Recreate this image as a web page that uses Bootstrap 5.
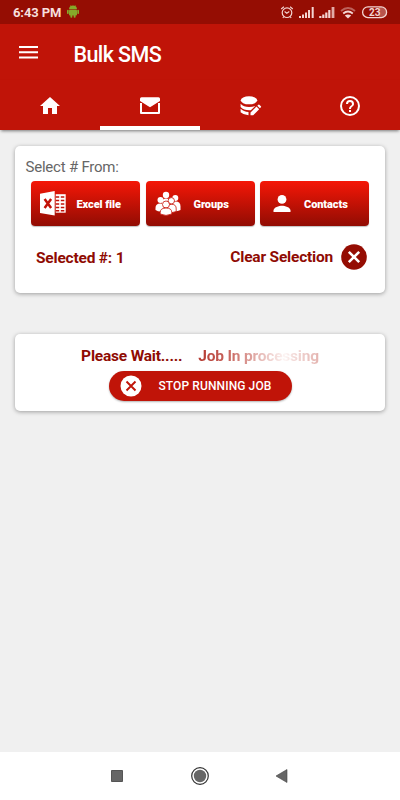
<!DOCTYPE html>
<html lang="en">
<head>
<meta charset="utf-8">
<meta name="viewport" content="width=device-width, initial-scale=1">
<title>Bulk SMS</title>
<link href="https://cdn.jsdelivr.net/npm/bootstrap@5.3.0/dist/css/bootstrap.min.css" rel="stylesheet">
<style>
body{font-family:Roboto,sans-serif;background:#f0f0f0;height:800px;overflow:hidden;line-height:1}
svg{display:block;flex:none}
.status{height:24px;background:#950d03;color:#f6dedc;font-size:13px;font-weight:700;letter-spacing:-.1px;padding:0 12px 0 13px}
.appbar{height:56px;background:#c01408;padding-left:19px}
.title{font-size:21.5px;font-weight:500;letter-spacing:-.6px;margin:5px 0 0 34.500px}
.tabs{height:50px;background:#c01408;box-shadow:0 2px 3px -1px rgba(0,0,0,.5)}
.tabs a{color:#fff;border-bottom:4px solid transparent;padding-top:6px}
.tabs a.on{border-color:#fff}
.panel{margin:0 15px;background:#fff;border-radius:5px;box-shadow:0 1px 4px rgba(0,0,0,.35)}
.pick{height:147px;margin-top:16px}
.job{height:77px;margin-top:41px}
.from{font-size:15px;letter-spacing:-.22px;color:#666;padding:14px 0 0 10.500px;height:35px}
.src{height:45px;width:109px;border:0;border-radius:4px;background:linear-gradient(#f51707,#910c03);color:#fff;font-size:11px;font-weight:900;letter-spacing:-.08px;padding:2px 0 0;box-shadow:0 1px 1px rgba(0,0,0,.25)}
.src svg{margin-top:-2px}
.dark-red{color:#8f0b03;font-weight:700;font-size:15.500px;letter-spacing:-.2px}
.summary{padding:0 18px 0 21px;margin-top:18px}
.clear-label{padding-top:2px}
.fade-text{background:linear-gradient(90deg,#b4382f 0,#c8655e 25%,#e4b4b0 50%,#f6e2e0 66%,#fdf6f5 72%,#f4dddb 78%,#e4b4b0 100%);background-clip:text;-webkit-background-clip:text;color:transparent}
.wait{padding-top:15px}
.stop{width:183px;height:30px;background:#c01408;color:#fff;font-size:12px;font-weight:500;letter-spacing:.1px;margin-top:6px;padding:0 0 0 11px;gap:17px;box-shadow:0 1px 2px rgba(0,0,0,.3)}
.navkeys{height:48px;background:#fff}
</style>
</head>
<body class="d-flex flex-column">
<div class="status d-flex align-items-center">
  <span>6:43 PM</span>
  <svg class="ms-1 me-auto" width="14" height="14" viewBox="-1 .2 14 14"><g fill="#86a92a"><path d="M3 4.500a4 3.800 0 0 1 8 0z"/><rect x="3" y="5" width="8" height="5.800" rx="1"/><rect x="1" y="5" width="1.700" height="4.300" rx=".8"/><rect x="11.300" y="5" width="1.700" height="4.300" rx=".8"/><rect x="4.400" y="10" width="1.900" height="3" rx=".8"/><rect x="7.700" y="10" width="1.900" height="3" rx=".8"/><path d="M4.400.5l1.200 1.800M9.600.5L8.400 2.300" stroke="#86a92a" stroke-width=".6"/></g></svg>
  <svg width="108" height="16" viewBox="280 4 108 16" fill="none" stroke="#f3d5d2">
    <circle cx="287" cy="12.700" r="4.800" stroke-width="1.200"/><path d="M284.600 11.500l2.200 1.800 2.500-1.800M281.200 9l2.700-2.200M292.800 9l-2.700-2.200M284 16.500l-1.200 1.500M290 16.500l1.200 1.500" stroke-width="1.100"/>
    <path d="M300 18v-2M303 18v-3.500M306 18v-5.500M309 18v-8M312.700 18V7" stroke-width="2"/>
    <path d="M320.300 18v-2M323.300 18v-3.500M326.300 18v-5.500M329.300 18v-8" stroke-width="2.200"/><path d="M333 18V7" stroke-width="2.800" stroke="#e2aaa6"/>
    <path d="M341 11q7-6 14 0" stroke="#bd625b" stroke-width="1.800"/><path d="M343.200 13.500q4.800-4 9.600 0" stroke-width="1.800"/><path d="M344.800 15.600q3.200-2.400 6.400 0l-3.200 2.900z" fill="#f3d5d2" stroke="none"/>
    <path d="M379 7h2.500a5 5 0 0 1 0 10.500H379z" fill="#b8544c" stroke="none"/><rect x="362.600" y="6.800" width="24" height="10.800" rx="5.400" stroke-width="1.300"/>
    <text x="369" y="16" font-size="10" font-weight="700" fill="#f3d5d2" stroke="none">23</text>
  </svg>
</div>
<header class="appbar d-flex align-items-center text-white">
  <svg width="20" height="16" viewBox="0 0 20 16" fill="#fff"><path d="M0 2h19v2H0zM0 7.200h19v2H0zM0 12.500h19v2H0z"/></svg>
  <span class="title">Bulk SMS</span>
</header>
<nav class="tabs nav nav-fill flex-nowrap">
  <a class="col-3 d-flex justify-content-center align-items-center" href="#" aria-label="Home"><svg width="24" height="24" viewBox="0 0 24 24" fill="#fff"><path d="M10 20v-6h4v6h5v-8h3L12 3 2 12h3v8z"/></svg></a>
  <a class="on col-3 d-flex justify-content-center align-items-center" href="#" aria-label="Message"><svg width="24" height="24" viewBox="0 0 24 24" fill="#fff"><path d="M3.500 3.300h17q1.500 0 1.500 1.500v2.300L12 13.300 2 7.100V4.800q0-1.500 1.500-1.500z"/><path d="M3 9v10h18V9" fill="none" stroke="#fff" stroke-width="2" stroke-linejoin="round"/></svg></a>
  <a class="col-3 d-flex justify-content-center align-items-center" href="#" aria-label="Data"><svg width="24" height="24" viewBox="0 0 24 24" fill="#fff"><ellipse cx="11" cy="6.300" rx="8.200" ry="4"/><path d="M2.600 9.700q3 3.300 8.400 3.300 3.600 0 6.300-1.100l-4.500 4.300q-6.700.5-10.200-3.200z"/><path d="M2.600 14.800q3 3 7.900 3.200v3.300q-4.800-.2-7.900-3.100z"/><path d="M12.500 18.600l6-6 2.700 2.700-6 6h-2.700zM19.300 11.800l1.100-1.100q.5-.4 1 0l1.500 1.500q.5.500 0 1L21.900 14.300z"/></svg></a>
  <a class="col-3 d-flex justify-content-center align-items-center" href="#" aria-label="Help"><svg width="24" height="24" viewBox="0 0 24 24" fill="#fff"><path d="M11 18h2v-2h-2zm1-16a10 10 0 1 0 0 20 10 10 0 0 0 0-20zm0 18a8 8 0 1 1 0-16 8 8 0 0 1 0 16zm0-14a4 4 0 0 0-4 4h2a2 2 0 1 1 4 0c0 2-3 1.750-3 5h2c0-2.250 3-2.500 3-5a4 4 0 0 0-4-4z"/></svg></a>
</nav>
<section class="panel pick">
  <div class="from">Select # From:</div>
  <div class="d-flex justify-content-between px-3">
    <button class="src d-flex align-items-center"><svg width="45.500" height="45" viewBox="0 0 45.500 45"><path d="M9 12.800L23.700 10v24.500L9 32z" fill="#fff"/><path d="M24.700 13.200h10v18.500h-10z" fill="#fff"/><path d="M24.700 16h3.500M24.700 19.500h3.500M24.700 23h3.500M24.700 26.500h3.500M24.700 29.800h3.500M29.800 16h3.500M29.800 19.500h3.500M29.800 23h3.500M29.800 26.500h3.500M29.800 29.800h3.500" stroke="#c21107" stroke-width="1.600"/><path d="M13.600 18l6.500 9M20.100 18l-6.500 9" stroke="#c21107" stroke-width="2.500"/></svg><span>Excel file</span></button>
    <button class="src d-flex align-items-center"><svg width="48" height="45" viewBox="0 0 48 45" fill="#fff"><circle cx="20" cy="14" r="3.200"/><path d="M16 22q0-4.500 4-4.500t4 4.500v3h-8z"/><circle cx="29.300" cy="17" r="3"/><path d="M26 30v-5q0-4.500 3.700-4.500 4.800 0 4.800 5v3.500q-4 2-8.500 1z"/><circle cx="14.500" cy="19" r="3"/><path d="M9.500 29v-2q0-4.500 4.700-4.500T18 26l-2 4.500q-3.500.5-6.500-1.500z"/><g stroke="#c81107" stroke-width=".8"><circle cx="25.300" cy="19.800" r="3.200"/><path d="M21 31v-3q0-4.700 4.700-4.700t4.500 4.700v2.500q-4 2-9.200.500z"/><circle cx="20" cy="23.500" r="3.500"/><path d="M14.200 33v-1.500q0-4.500 5.800-4.500t5.800 4.500V33q-5.800 2.800-11.600 0z"/></g></svg><span>Groups</span></button>
    <button class="src d-flex align-items-center"><svg width="44" height="45" viewBox="0 0 44 45" fill="#fff"><circle cx="22" cy="18.400" r="4.400"/><path d="M13.500 31v-1.500c0-3.200 5.700-4.800 8.500-4.800s8.500 1.600 8.500 4.800V31z"/></svg><span>Contacts</span></button>
  </div>
  <div class="summary d-flex align-items-center justify-content-between dark-red">
    <span class="pt-1">Selected #: 1</span>
    <span class="d-flex align-items-center"><span class="clear-label me-2">Clear Selection</span><svg width="26" height="26" viewBox="0 0 26 26"><circle cx="13" cy="13" r="12.800" fill="#950d03"/><path d="M7.800 7.800l10.400 10.400M18.200 7.800L7.800 18.200" stroke="#fff" stroke-width="2.600"/></svg></span>
  </div>
</section>
<section class="panel job d-flex flex-column align-items-center">
  <div class="wait dark-red d-flex"><span class="me-3">Please Wait.....</span><span class="fade-text">Job In processing</span></div>
  <button class="stop btn rounded-pill border-0 d-flex align-items-center"><svg width="22" height="22" viewBox="0 0 22 22"><circle cx="11" cy="11" r="10.500" fill="#fff"/><path d="M6.500 6.500l9 9M15.500 6.500l-9 9" stroke="#c01408" stroke-width="1.900"/></svg><span>STOP RUNNING JOB</span></button>
</section>
<footer class="navkeys mt-auto d-flex justify-content-center">
  <svg width="200" height="48" viewBox="100 0 200 48" fill="#666"><path d="M111.500 18.500h11v11h-11z" stroke="#555"/><circle cx="200" cy="24" r="8.300" fill="none" stroke="#333" stroke-width="1.200"/><circle cx="200" cy="24" r="6.200"/><path d="M276 24l11-6.500v13z" stroke="#444" stroke-width=".6"/></svg>
</footer>
<script src="https://cdn.jsdelivr.net/npm/bootstrap@5.3.0/dist/js/bootstrap.bundle.min.js"></script>
</body>
</html>
